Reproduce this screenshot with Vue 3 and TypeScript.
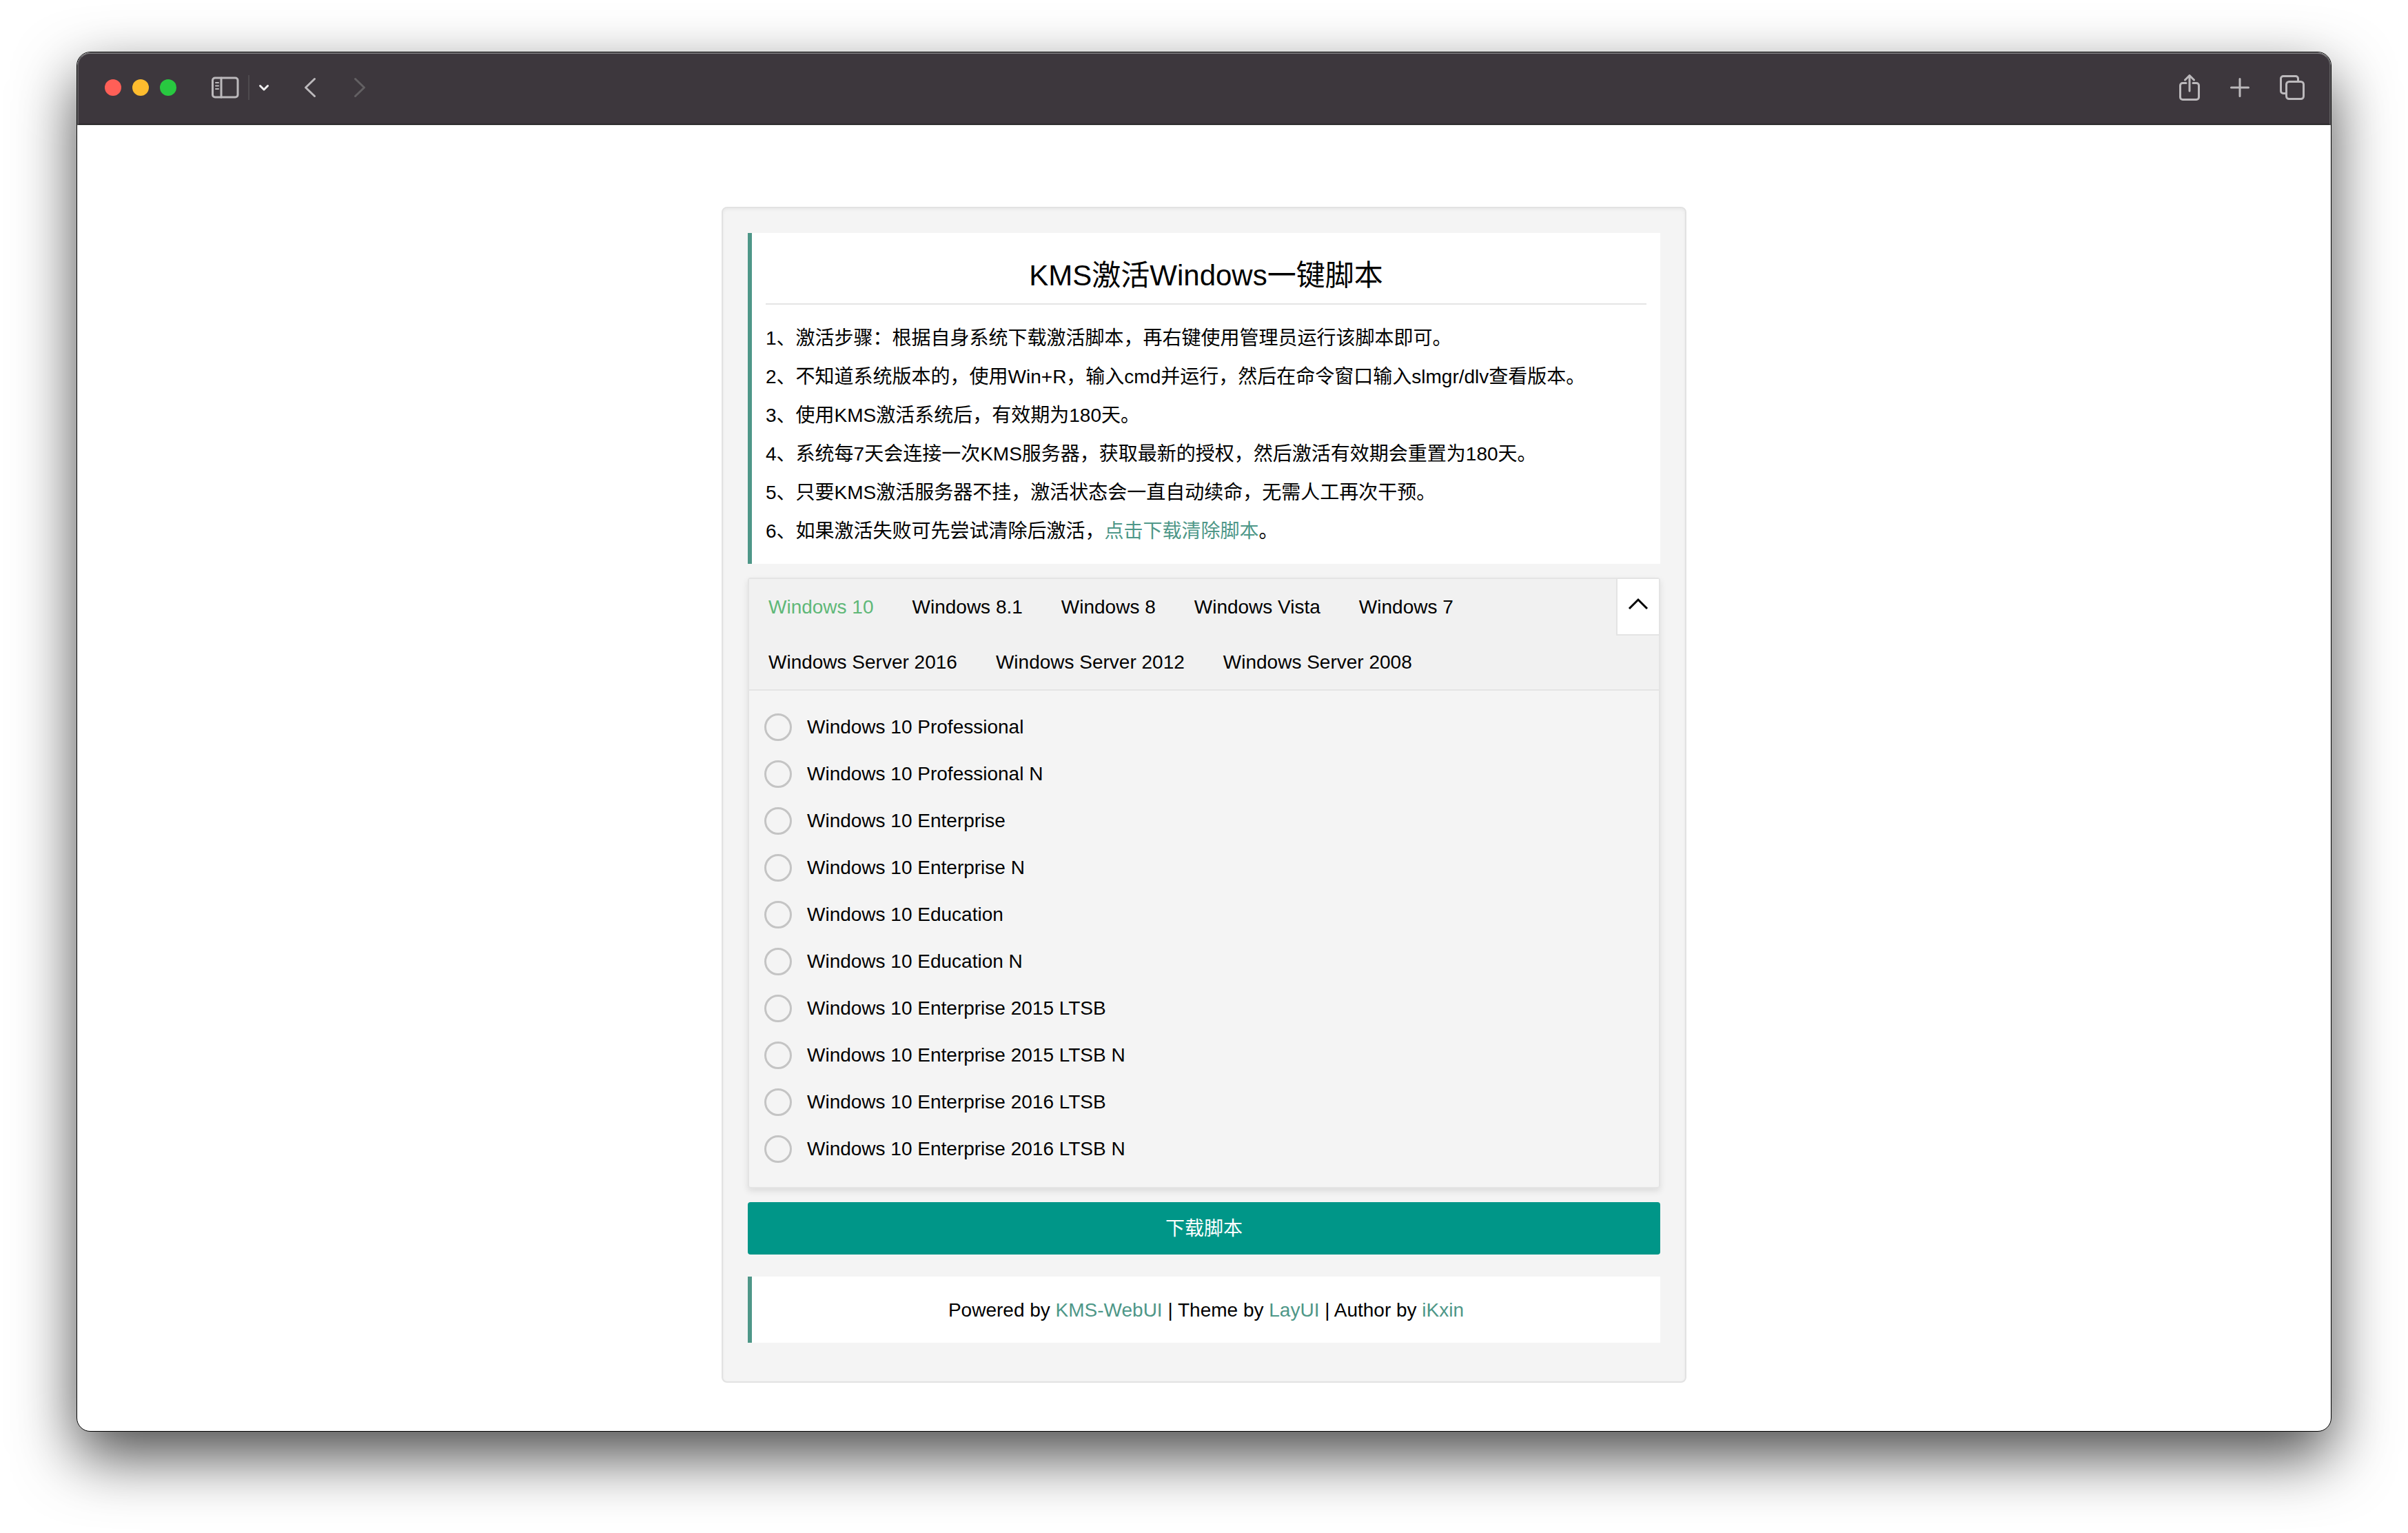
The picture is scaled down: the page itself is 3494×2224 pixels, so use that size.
<script setup lang="ts">
import { ref } from 'vue'

const steps: string[] = [
  '激活步骤：根据自身系统下载激活脚本，再右键使用管理员运行该脚本即可。',
  '不知道系统版本的，使用Win+R，输入cmd并运行，然后在命令窗口输入slmgr/dlv查看版本。',
  '使用KMS激活系统后，有效期为180天。',
  '系统每7天会连接一次KMS服务器，获取最新的授权，然后激活有效期会重置为180天。',
  '只要KMS激活服务器不挂，激活状态会一直自动续命，无需人工再次干预。',
]

const tabs: string[] = [
  'Windows 10',
  'Windows 8.1',
  'Windows 8',
  'Windows Vista',
  'Windows 7',
  'Windows Server 2016',
  'Windows Server 2012',
  'Windows Server 2008',
]

const editions: string[] = [
  'Professional',
  'Professional N',
  'Enterprise',
  'Enterprise N',
  'Education',
  'Education N',
  'Enterprise 2015 LTSB',
  'Enterprise 2015 LTSB N',
  'Enterprise 2016 LTSB',
  'Enterprise 2016 LTSB N',
]

const activeTab = ref<string>(tabs[0])
const edition = ref<string>('')
</script>

<template>
  <div class="desktop">
    <div class="window">
      <header class="toolbar">
        <div class="lights">
          <span class="light close"></span>
          <span class="light minimize"></span>
          <span class="light maximize"></span>
        </div>
        <div class="sidebar-group">
          <button class="tool" type="button" aria-label="Sidebar">
            <svg width="40" height="32" viewBox="0 0 40 32">
              <rect x="1.5" y="2" width="36.5" height="28" rx="3.5" />
              <path d="M14 2v28" />
              <path class="thin" d="M6 9h4M6 13.500h4M6 18h4" />
            </svg>
          </button>
          <span class="divider"></span>
          <button class="tool" type="button" aria-label="Tab groups">
            <svg class="bright" width="16" height="12" viewBox="0 0 16 12">
              <path d="M2.500 3.500L8 9l5.500-5.500" />
            </svg>
          </button>
        </div>
        <nav class="history">
          <button class="tool" type="button" aria-label="Back">
            <svg width="18" height="30" viewBox="0 0 18 30">
              <path d="M15.500 2.500L2.500 15l13 12.500" />
            </svg>
          </button>
          <button class="tool" type="button" aria-label="Forward" disabled>
            <svg width="18" height="30" viewBox="0 0 18 30">
              <path d="M2.500 2.500l13 12.500-13 12.500" />
            </svg>
          </button>
        </nav>
        <div class="actions">
          <button class="tool" type="button" aria-label="Share">
            <svg width="30" height="38" viewBox="0 0 30 38">
              <path d="M10 12.500H5a3.500 3.500 0 0 0-3.500 3.500v17A3.500 3.500 0 0 0 5 36.500h20a3.500 3.500 0 0 0 3.500-3.500V16a3.500 3.500 0 0 0-3.500-3.500h-5" />
              <path d="M15 24V2M8.500 8L15 1.500 21.500 8" />
            </svg>
          </button>
          <button class="tool" type="button" aria-label="New tab">
            <svg width="28" height="28" viewBox="0 0 28 28">
              <path d="M14 1.500v25M1.500 14h25" />
            </svg>
          </button>
          <button class="tool" type="button" aria-label="Tab overview">
            <svg width="36" height="36" viewBox="0 0 36 36">
              <rect x="9.500" y="9.500" width="25" height="25" rx="4" />
              <path d="M9.500 26.500H5A3.500 3.500 0 0 1 1.500 23V5A3.500 3.500 0 0 1 5 1.500h18A3.500 3.500 0 0 1 26.500 5v4.500" />
            </svg>
          </button>
        </div>
      </header>

      <main class="page">
        <div class="card">
          <section class="quote">
            <h1>KMS激活Windows一键脚本</h1>
            <hr />
            <p v-for="(step, index) in steps" :key="index">{{ index + 1 }}、{{ step }}</p>
            <p>6、如果激活失败可先尝试清除后激活，<a href="#">点击下载清除脚本</a>。</p>
          </section>

          <form @submit.prevent>
            <section class="panel">
              <div class="panel-head">
                <div class="tabs" role="tablist">
                  <button
                    v-for="tab in tabs"
                    :key="tab"
                    class="tab"
                    :class="{ active: tab === activeTab }"
                    type="button"
                    role="tab"
                    :aria-selected="tab === activeTab"
                    @click="activeTab = tab"
                  >{{ tab }}</button>
                </div>
                <button class="collapse" type="button" aria-label="Collapse tabs">
                  <svg width="30" height="18" viewBox="0 0 30 18">
                    <path d="M2 16L15 3l13 13" />
                  </svg>
                </button>
              </div>
              <div class="options">
                <label v-for="name in editions" :key="name" class="option">
                  <input v-model="edition" type="radio" name="edition" :value="name" />
                  <span>Windows 10 {{ name }}</span>
                </label>
              </div>
            </section>
            <button class="download" type="submit">下载脚本</button>
          </form>

          <footer class="quote credits">
            <p>
              Powered by <a href="#">KMS-WebUI</a> | Theme by <a href="#">LayUI</a> | Author by
              <a href="#">iKxin</a>
            </p>
          </footer>
        </div>
      </main>
    </div>
  </div>
</template>

<style>
body {
  margin: 0;
  background: #fff;
}
</style>

<style scoped>
.desktop {
  box-sizing: border-box;
  min-height: 100vh;
  padding: 75px 111px 147px;
  display: flex;
  flex-direction: column;
  overflow: hidden;
  color: #000;
  font: 28px/56px "Liberation Sans", "Noto Sans CJK SC", sans-serif;
}

button {
  margin: 0;
  border: 0;
  padding: 0;
  background: none;
  color: inherit;
  font: inherit;
}

a {
  color: #4e9788;
  text-decoration: none;
}

.window {
  flex: 1;
  display: flex;
  flex-direction: column;
  border: 1px solid #000;
  border-radius: 20px;
  background: #fff;
  box-shadow: 0 36px 88px rgba(0, 0, 0, 0.7);
}

.toolbar {
  box-sizing: border-box;
  height: 105px;
  padding: 0 36px 4px 38px;
  display: flex;
  align-items: center;
  border: 2px solid #5f5d60;
  border-top-color: #787679;
  border-bottom: 1px solid #000;
  border-radius: 19px 19px 0 0;
  background: #3d373d;
  box-shadow: 0 1px 0 #c4c4c4;
}

.lights {
  display: flex;
  gap: 16px;
}

.light {
  width: 24px;
  height: 24px;
  border-radius: 50%;
}

.close {
  background: #ff5f57;
}

.minimize {
  background: #febc2e;
}

.maximize {
  background: #28c840;
}

.sidebar-group {
  display: flex;
  align-items: center;
  margin-left: 51px;
}

.divider {
  width: 2px;
  height: 36px;
  margin: 0 13px;
  background: #4e4a4e;
}

.history {
  display: flex;
  gap: 54px;
  margin-left: 50px;
}

.actions {
  display: flex;
  align-items: center;
  gap: 44px;
  margin-left: auto;
}

.tool {
  display: flex;
}

.tool svg {
  fill: none;
  stroke: #bcb9bc;
  stroke-width: 3;
  stroke-linecap: round;
  stroke-linejoin: round;
}

.tool .thin {
  stroke-width: 2;
}

.tool .bright {
  stroke: #f0eff0;
}

.tool:disabled svg {
  stroke: #636063;
}

.page {
  flex: 1;
  padding: 119px 40px 70px;
}

.card {
  box-sizing: border-box;
  max-width: 1400px;
  margin: 0 auto;
  padding: 36px 36px 56px;
  border: 2px solid #e2e2e2;
  border-radius: 8px;
  background: #f4f4f4;
  box-shadow: inset 0 2px 4px rgba(0, 0, 0, 0.05);
}

.quote {
  padding: 21px 20px 19px;
  border-left: 6px solid #4e9788;
  background: #fff;
}

.quote h1 {
  margin: 0;
  font-size: 42px;
  font-weight: 400;
  line-height: 81px;
  text-align: center;
}

.quote hr {
  height: 2px;
  margin: 0 0 21px;
  border: 0;
  background: #e4e4e4;
}

.quote p {
  margin: 0;
}

.panel {
  margin: 20px 0;
  border: 2px solid #e4e4e4;
  border-radius: 4px;
  box-shadow: 0 4px 10px rgba(0, 0, 0, 0.1);
}

.panel-head {
  display: flex;
  align-items: flex-start;
  border-bottom: 2px solid #e4e4e4;
  background: #f1f1f1;
}

.tabs {
  flex: 1;
  display: flex;
  flex-wrap: wrap;
}

.tab {
  padding: 2px 28px 0;
  line-height: 78px;
}

.tab.active {
  color: #5fb878;
}

.collapse {
  width: 62px;
  height: 82px;
  display: flex;
  align-items: center;
  justify-content: center;
  border-left: 2px solid #e4e4e4;
  border-bottom: 2px solid #e4e4e4;
  background: #fff;
}

.collapse svg {
  margin-bottom: 8px;
  fill: none;
  stroke: #000;
  stroke-width: 3;
}

.options {
  padding: 19px 22px 21px;
}

.option {
  height: 68px;
  display: flex;
  align-items: center;
  gap: 22px;
}

.option input {
  appearance: none;
  width: 40px;
  height: 40px;
  margin: 0;
  border: 3px solid #c4c4c4;
  border-radius: 50%;
}

.option input:checked {
  border: 12px solid #5fb878;
}

.download {
  display: block;
  width: 100%;
  padding-top: 2px;
  border-radius: 4px;
  background: #009688;
  color: #fff;
  line-height: 74px;
}

.credits {
  margin-top: 32px;
  text-align: center;
}
</style>
